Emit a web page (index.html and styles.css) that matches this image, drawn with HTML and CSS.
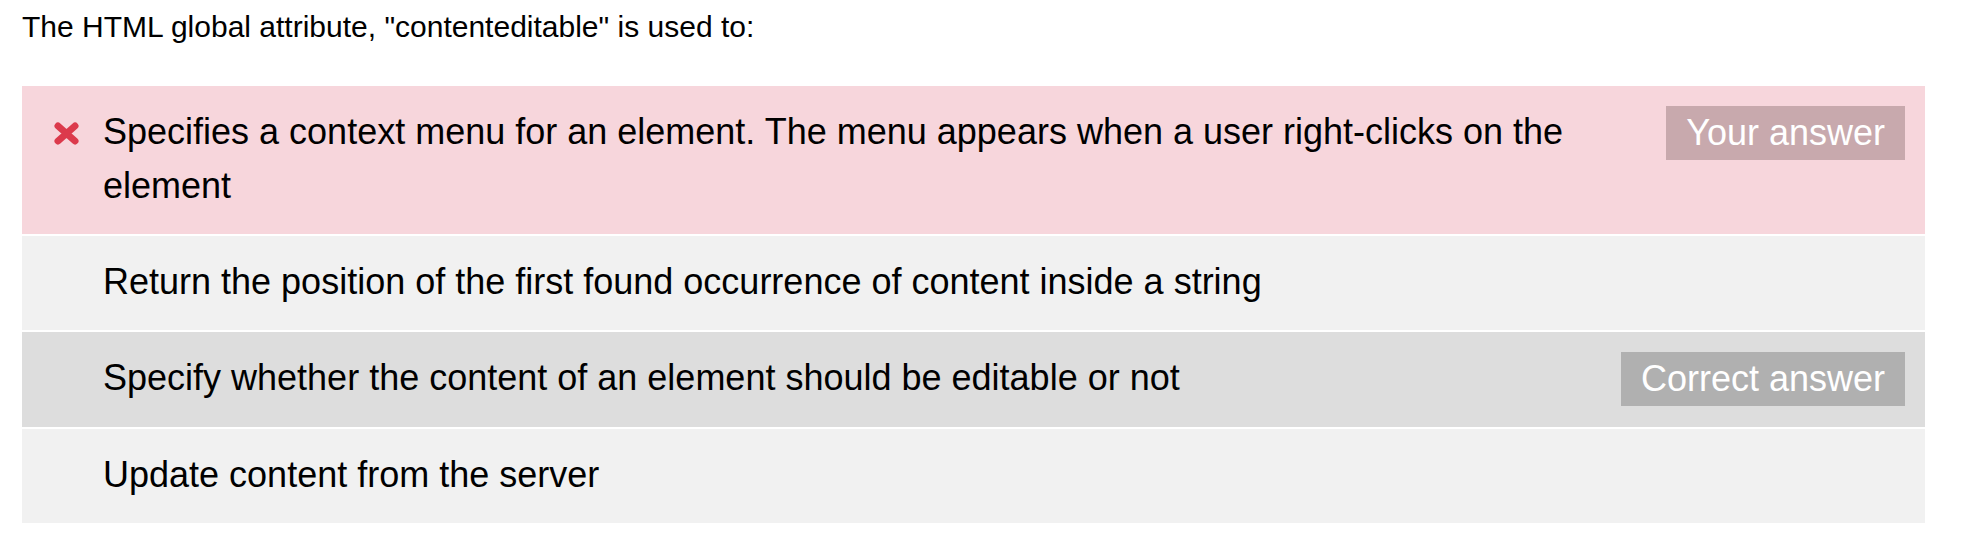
FILE: index.html
```html
<!DOCTYPE html>
<html lang="en">
<head>
<meta charset="utf-8">
<title>Quiz result</title>
<link rel="stylesheet" href="styles.css">
</head>
<body>
<div class="quiz">
  <p class="question">The HTML global attribute, "contenteditable" is used to:</p>
  <div class="answers">
    <div class="answer wrong">
      <span class="mark"><svg class="mark-icon" width="25" height="23" viewBox="0 0 25 23" aria-hidden="true"><path d="M4 4 L21 19 M21 4 L4 19" stroke="#dc3a4c" stroke-width="7" stroke-linecap="round" fill="none"/></svg></span>
      <span class="text">Specifies a context menu for an element. The menu appears when a user right-clicks on the element</span>
      <span class="badge badge-yours">Your answer</span>
    </div>
    <div class="answer">
      <span class="mark"></span>
      <span class="text">Return the position of the first found occurrence of content inside a string</span>
    </div>
    <div class="answer correct">
      <span class="mark"></span>
      <span class="text">Specify whether the content of an element should be editable or not</span>
      <span class="badge badge-correct">Correct answer</span>
    </div>
    <div class="answer">
      <span class="mark"></span>
      <span class="text">Update content from the server</span>
    </div>
  </div>
</div>
</body>
</html>
```
FILE: styles.css
```css
body {
  margin: 0;
  background: #ffffff;
  color: #000000;
  font-family: "Liberation Sans", Arial, Helvetica, sans-serif;
}

.quiz {
  width: 1903px;
  margin-left: 22px;
  padding-top: 10px;
}

.question {
  margin: 0 0 42px;
  font-size: 30px;
  line-height: 34px;
}

.answers {
  display: flex;
  flex-direction: column;
  gap: 2px;
}

.answer {
  display: flex;
  align-items: flex-start;
  padding: 19px 20px 21px 0;
  background: #f1f1f1;
  font-size: 36px;
  line-height: 54px;
}

.mark {
  flex: none;
  width: 81px;
  height: 54px;
  padding-left: 32px;
  box-sizing: border-box;
}

.mark-icon {
  display: block;
  margin-top: 17px;
}

.text {
  flex: 1;
  min-width: 0;
}

.badge {
  flex: none;
  margin: 1px 0 0 20px;
  padding: 0 20px;
  line-height: 54px;
  color: #ffffff;
  white-space: nowrap;
}

.wrong {
  background: #f7d6dc;
}

.badge-yours {
  background: #c8a9ad;
}

.correct {
  background: #dddddd;
}

.badge-correct {
  background: #b0b0b0;
}
```
